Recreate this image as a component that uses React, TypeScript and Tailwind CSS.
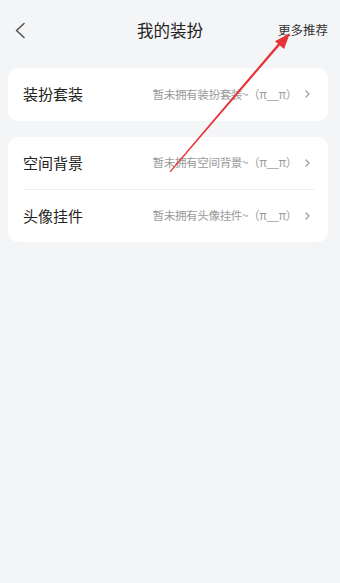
import React from "react";

const font = { fontFamily: '"Noto Sans CJK SC", "Noto Sans", sans-serif' };

function Row({ label, hint, tall }: { label: string; hint: string; tall?: boolean }) {
  return (
    <div className={tall ? "flex h-[53px] items-center justify-between pl-[15px] pr-[18px]" : "flex h-[52px] items-center justify-between pl-[15px] pr-[18px]"}>
      <span className="text-[15px] text-[#222222]">{label}</span>
      <div className="flex items-center gap-[8px]">
        <span className="text-[11.6px] tracking-[-0.4px] text-[#9a9a9a]">{hint}</span>
        <svg width="5" height="8" viewBox="0 0 5 8" fill="none">
          <path d="M1 1l3 3-3 3" stroke="#9a9a9a" strokeWidth="1.2" strokeLinecap="round" strokeLinejoin="round" />
        </svg>
      </div>
    </div>
  );
}

export default function App() {
  return (
    <div className="relative h-[583px] w-[340px] overflow-hidden bg-[#f4f5f7]" style={font}>
      <div className="relative flex h-[60px] items-center justify-center">
        <svg className="absolute left-[14px] top-[22px]" width="12" height="17" viewBox="0 0 12 17" fill="none">
          <path d="M10 1.5L2.5 8.5L10 15.5" stroke="#555555" strokeWidth="1.6" strokeLinecap="round" strokeLinejoin="round" />
        </svg>
        <span className="text-[16.5px] text-[#222222]">我的装扮</span>
        <span className="absolute right-[12px] top-[21px] text-[12.5px] text-[#333333]">更多推荐</span>
      </div>
      <div className="ml-[8px] mr-[12px] flex flex-col gap-[16px] pt-[8px]">
        <div className="rounded-[10px] bg-white">
          <Row label="装扮套装" hint="暂未拥有装扮套装~（π__π）" tall />
        </div>
        <div className="rounded-[10px] bg-white">
          <Row label="空间背景" hint="暂未拥有空间背景~（π__π）" />
          <div className="ml-[15px] mr-[13px] h-px bg-[#efefef]" />
          <Row label="头像挂件" hint="暂未拥有头像挂件~（π__π）" />
        </div>
      </div>
      <svg className="pointer-events-none absolute left-0 top-0" width="340" height="583" viewBox="0 0 340 583">
        <polygon points="169.5,171.5 170.5,172.3 281,44 279,42.5" fill="#e53338" />
        <polygon points="290,33 284,49 275,41.2" fill="#e53338" />
      </svg>
    </div>
  );
}
